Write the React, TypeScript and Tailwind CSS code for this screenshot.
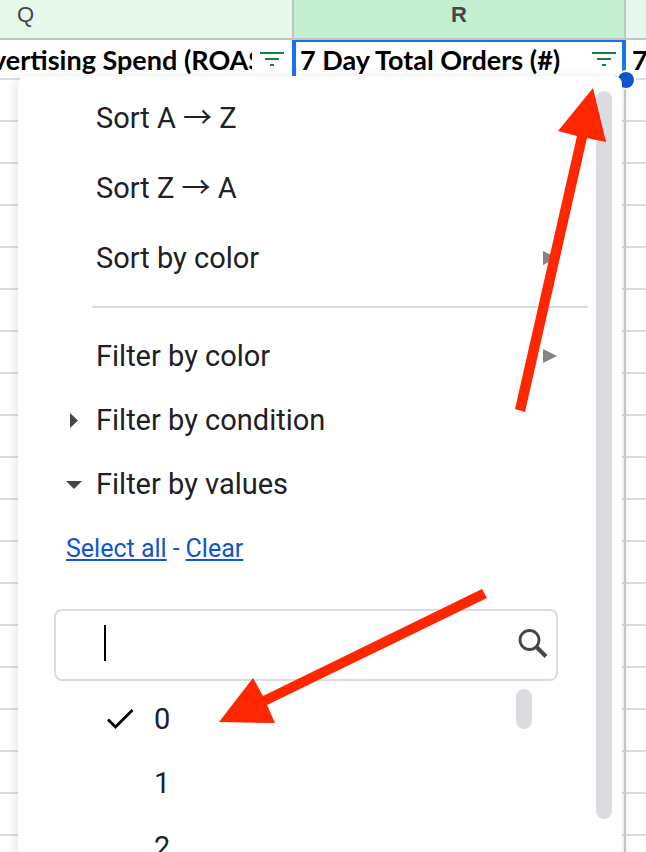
import { useState } from 'react';

const EMPTY_ROWS = 19;
const VALUES = ['0', '1', '2'];

function FilterIcon() {
  return (
    <svg viewBox="0 0 24 14" className="h-[14px] w-6 shrink-0" fill="#188038" aria-hidden="true">
      <rect x="0" y="0" width="24" height="2" />
      <rect x="5" y="6" width="14" height="2" />
      <rect x="10" y="12" width="4" height="2" />
    </svg>
  );
}

function Sheet() {
  return (
    <table className="w-full table-fixed border-separate border-spacing-0">
      <colgroup>
        <col className="w-[294px]" />
        <col />
        <col className="w-5" />
      </colgroup>
      <thead className="text-[22px] leading-[30px] text-[#444746]">
        <tr className="h-10">
          <th className="border-r-2 border-b-2 border-[#c0c4c2] bg-[#e6f8ec] p-0 pl-[17px] text-left align-top font-normal">Q</th>
          <th className="border-r-2 border-b-2 border-[#c0c4c2] bg-[#c4eed0] p-0 align-top font-bold">R</th>
          <th className="border-b-2 border-[#c0c4c2] bg-[#e6f8ec] p-0"></th>
        </tr>
      </thead>
      <tbody>
        <tr className="h-10 font-[Lato,sans-serif] text-[27px] leading-9 font-bold text-black">
          <td className="border-b-2 border-[#dadce0] p-0">
            <div className="flex items-center gap-2 pr-[10px]">
              <div className="-ml-2 min-w-0 flex-1 overflow-hidden pt-[2px] whitespace-nowrap">
                vertising Spend (ROAS)
              </div>
              <FilterIcon />
            </div>
          </td>
          <td className="relative border-b-2 border-[#dadce0] p-0">
            <div className="flex items-center justify-between pr-[10px] pl-[6px]">
              <div className="pt-[2px] whitespace-nowrap">7 Day Total Orders (#)</div>
              <FilterIcon />
            </div>
            {/* active cell outline and its fill handle */}
            <div className="absolute top-0 right-0 -bottom-[2px] -left-[2px] border-4 border-t-2 border-[#1a73e8]"></div>
            <div className="absolute -right-2 -bottom-[10px] z-10 size-4 rounded-full bg-[#1155cc] ring-2 ring-white"></div>
          </td>
          <td className="border-b-2 border-[#dadce0] p-0">
            <div className="pt-[2px] pl-[6px]">7</div>
          </td>
        </tr>
        {Array.from({ length: EMPTY_ROWS }, (_, i) => (
          <tr key={i} className="h-[42px]">
            <td className="border-r-2 border-b-2 border-[#dadce0] p-0"></td>
            <td className="border-r-2 border-b-2 border-r-[#cccccc] border-b-[#dadce0] p-0"></td>
            <td className="border-b-2 border-[#dadce0] p-0"></td>
          </tr>
        ))}
      </tbody>
    </table>
  );
}

function SubmenuArrow() {
  return (
    <svg viewBox="0 0 14 14" className="size-[14px]" fill="#858585" aria-hidden="true">
      <path d="M0 0L14 7L0 14Z" />
    </svg>
  );
}

function SortItem({ label, submenu }: { label: string; submenu?: boolean }) {
  return (
    <button type="button" className="flex h-[70px] w-full items-center justify-between pr-[39px] pl-[78px] text-left">
      {label}
      {submenu && <SubmenuArrow />}
    </button>
  );
}

function SectionItem({ label, open }: { label: string; open: boolean }) {
  return (
    <button type="button" aria-expanded={open} className="flex h-16 w-full items-center gap-[14px] pl-12 text-left">
      <svg viewBox="0 0 16 16" className="size-4" fill="#444746" aria-hidden="true">
        {open ? <path d="M0 5H16L8 13Z" /> : <path d="M4 1V16L12 8.500Z" />}
      </svg>
      {label}
    </button>
  );
}

function FilterMenu() {
  const [query, setQuery] = useState('');
  const [checked, setChecked] = useState<string[]>(['0']);

  const toggle = (value: string) => {
    setChecked(checked.includes(value) ? checked.filter((v) => v !== value) : [...checked, value]);
  };

  return (
    <div className="absolute top-[76px] right-6 bottom-0 left-[18px] z-20 flex rounded-t-lg bg-white font-[Roboto,'Noto_Sans_CJK_SC',sans-serif] text-[29px] leading-9 text-[#202124] shadow-[0_4px_8px_3px_rgba(60,64,67,0.12)]">
      <div className="min-w-0 flex-1 overflow-hidden pt-[7px]">
        <SortItem label="Sort A → Z" />
        <SortItem label="Sort Z → A" />
        <SortItem label="Sort by color" submenu />
        <hr className="mt-[13px] mr-2 mb-4 ml-[74px] border-t-2 border-[#dadce0]" />
        <button type="button" className="flex h-16 w-full items-center justify-between pr-[39px] pl-[78px] text-left">
          Filter by color
          <SubmenuArrow />
        </button>
        <SectionItem label="Filter by condition" open={false} />
        <SectionItem label="Filter by values" open />

        <div className="flex h-[66px] items-center gap-[6px] pl-12 text-[25px] text-[#1155cc]">
          <a href="#all" className="underline">Select all</a>
          <span>-</span>
          <a href="#clear" className="underline">Clear</a>
        </div>

        <div className="mt-[27px] mr-[38px] ml-9 flex h-[72px] items-center rounded-lg border-2 border-[#dadce0] pr-2 pb-1 pl-12">
          <span className="h-9 w-[2px] bg-black"></span>
          <input
            type="text"
            aria-label="Search values"
            value={query}
            onChange={(e) => setQuery(e.target.value)}
            className="min-w-0 flex-1 caret-transparent outline-none"
          />
          <svg viewBox="0 0 30 30" className="size-[30px]" fill="none" stroke="#444746" aria-hidden="true">
            <circle cx="11.500" cy="12" r="9.500" strokeWidth="2.800" />
            <path d="M18 18.500L28 28.500" strokeWidth="4" />
          </svg>
        </div>

        <div className="mr-16 ml-[88px] flex justify-between pt-[6px]">
          <div>
            {VALUES.map((value) => (
              <label key={value} className="flex h-16 items-center gap-5">
                <span className="grid size-7 place-items-center">
                  <input
                    type="checkbox"
                    checked={checked.includes(value)}
                    onChange={() => toggle(value)}
                    className="peer col-start-1 row-start-1 size-7 appearance-none"
                  />
                  <svg
                    viewBox="0 0 28 28"
                    className="invisible col-start-1 row-start-1 size-7 peer-checked:visible"
                    fill="none"
                    stroke="#000000"
                    strokeWidth="2.800"
                    aria-hidden="true"
                  >
                    <path d="M2 14.500L9.500 22L26.500 5" />
                  </svg>
                </span>
                {value}
              </label>
            ))}
          </div>
          <div className="mt-[2px] h-10 w-4 rounded-full bg-[#dadce0]"></div>
        </div>
      </div>
      <div className="mt-[15px] mr-[10px] mb-[33px] w-4 shrink-0 rounded-full bg-[#dadce0]"></div>
    </div>
  );
}

// Red pointers drawn on top of the sheet
function Annotations() {
  return (
    <svg
      width="646"
      height="852"
      viewBox="0 0 646 852"
      className="pointer-events-none absolute top-0 left-0 z-30"
      fill="#ff2600"
      aria-hidden="true"
    >
      <path d="M593 88L606 142L587 138L525 412L515 409L577 136L558 131Z" />
      <path d="M219 722L253 678L263 696L482 589L487 598L267 705L275 723Z" />
    </svg>
  );
}

export default function App() {
  return (
    <div className="relative h-screen overflow-hidden bg-white font-['Liberation_Sans',sans-serif]">
      <Sheet />
      <FilterMenu />
      <Annotations />
    </div>
  );
}
